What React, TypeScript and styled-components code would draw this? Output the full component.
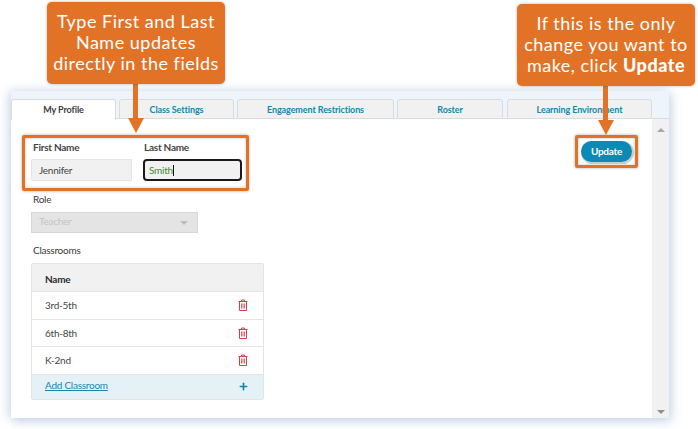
import React from 'react';
import styled, { createGlobalStyle } from 'styled-components';
import { Plus } from 'lucide-react';

const GlobalStyle = createGlobalStyle`
  html, body {
    margin: 0;
    padding: 0;
    background: #fff;
  }
  body {
    font-family: Lato, "Liberation Sans", sans-serif;
  }
`;

const Page = styled.div`
  position: relative;
  width: 698px;
  height: 429px;
  overflow: hidden;
  padding: 91px 0 0 11px;
  box-sizing: border-box;
`;

const Panel = styled.div`
  width: 658px;
  height: 327px;
  background: #fff;
  box-shadow: -3px 0 10px rgba(130, 160, 200, 0.3), 3px 3px 10px rgba(130, 160, 200, 0.35);
  display: flex;
  flex-direction: column;
`;

const TabStrip = styled.div`
  height: 28px;
  box-sizing: border-box;
  padding-top: 8px;
  background: #eef4fb;
  border-bottom: 1px solid #d9dcdf;
  display: flex;
`;

const Tab = styled.div<{ $w: number; $gap: number; $active?: boolean }>`
  width: ${p => p.$w}px;
  margin-right: ${p => p.$gap}px;
  height: ${p => (p.$active ? 21 : 20)}px;
  box-sizing: border-box;
  border: 1px solid #d9dcdf;
  border-bottom: ${p => (p.$active ? 'none' : '1px solid #d9dcdf')};
  border-radius: 3px 3px 0 0;
  background: ${p => (p.$active ? '#fff' : '#f1f1f1')};
  color: ${p => (p.$active ? '#3c3c3c' : '#1587ad')};
  font-size: 9px;
  font-weight: 700;
  letter-spacing: -0.1px;
  line-height: 20px;
  text-align: center;
  z-index: 1;
`;

const Body = styled.div`
  flex: 1;
  display: flex;
  min-height: 0;
`;

const Content = styled.div`
  flex: 1;
  position: relative;
  padding: 22px 0 0 20px;
  letter-spacing: -0.25px;
`;

const Scrollbar = styled.div`
  width: 17px;
  background: #f1f1f1;
  display: flex;
  flex-direction: column;
  justify-content: space-between;
  align-items: center;
  padding: 9px 0 4px;
  box-sizing: border-box;
`;

const ScrollArrow = styled.div<{ $down?: boolean }>`
  width: 0;
  height: 0;
  border-left: 4px solid transparent;
  border-right: 4px solid transparent;
  ${p => (p.$down ? 'border-top: 4px solid #8f8f8f;' : 'border-bottom: 4px solid #a8a8a8;')}
`;

const NameRow = styled.div`
  display: flex;
  gap: 11px;
`;

const Field = styled.div<{ $w: number }>`
  width: ${p => p.$w}px;
`;

const Label = styled.div<{ $pad?: number }>`
  font-size: 10px;
  font-weight: 700;
  color: #444;
  line-height: 12px;
  padding-left: ${p => p.$pad ?? 2}px;
  margin-bottom: 6px;
`;

const PlainLabel = styled(Label)`
  font-weight: 400;
  color: #3a3a3a;
  margin-bottom: 7px;
`;

const TextBox = styled.div<{ $focused?: boolean }>`
  height: 22px;
  box-sizing: border-box;
  background: #f1f1f1;
  border: ${p => (p.$focused ? '2px solid #1a1a1a' : '1px solid #e4e4e4')};
  border-radius: ${p => (p.$focused ? 4 : 1)}px;
  font-size: 10px;
  line-height: ${p => (p.$focused ? 18 : 20)}px;
  padding-left: ${p => (p.$focused ? 4 : 7)}px;
  color: ${p => (p.$focused ? '#3f8a3a' : '#444')};
`;

const Caret = styled.span`
  display: inline-block;
  width: 1px;
  height: 11px;
  background: #111;
  vertical-align: -2px;
`;

const Select = styled.div`
  width: 167px;
  height: 21px;
  box-sizing: border-box;
  margin-bottom: 11px;
  background: #e4e4e4;
  border: 1px solid #d8d8d8;
  font-size: 10px;
  line-height: 17px;
  padding: 0 9px 2px 7px;
  color: #c4c4c4;
  display: flex;
  justify-content: space-between;
  align-items: center;
`;

const SelectArrow = styled.div`
  width: 0;
  height: 0;
  margin-top: 2px;
  border-left: 4px solid transparent;
  border-right: 4px solid transparent;
  border-top: 4px solid #bdbdbd;
`;

const RoleGroup = styled.div`
  margin-top: 12px;
`;

const Table = styled.div`
  width: 233px;
  box-sizing: border-box;
  border: 1px solid #e2e4e6;
  border-radius: 2px;
`;

const HeadRow = styled.div`
  height: 27px;
  background: #f1f1f1;
  border-bottom: 1px solid #e2e4e6;
  font-size: 10px;
  font-weight: 700;
  color: #2c2c2c;
  line-height: 30px;
  padding-left: 13px;
`;

const Row = styled.div`
  height: 26.5px;
  border-bottom: 1px solid #e2e4e6;
  font-size: 10px;
  color: #444;
  display: flex;
  align-items: center;
  justify-content: space-between;
  padding: 0 15px 0 13px;
`;

const AddRow = styled.div`
  height: 24px;
  background: #e4f1f6;
  display: flex;
  align-items: center;
  justify-content: space-between;
  padding: 0 14px 0 13px;
  font-size: 10px;
  color: #1587ad;
`;

const AddLink = styled.a`
  color: #1587ad;
  text-decoration: underline;
  margin-top: -3px;
`;

const UpdateButton = styled.button`
  position: absolute;
  top: 22px;
  right: 20px;
  width: 51px;
  height: 21px;
  border: none;
  border-radius: 11px;
  background: #0a8ab5;
  box-shadow: 1px 1px 0 1px #cfcfcf;
  color: #fff;
  font-family: inherit;
  font-size: 10px;
  font-weight: 700;
  letter-spacing: -0.25px;
  padding: 0 0 2px;
`;

const Highlight = styled.div<{ $x: number; $y: number; $w: number; $h: number }>`
  position: absolute;
  left: ${p => p.$x}px;
  top: ${p => p.$y}px;
  width: ${p => p.$w}px;
  height: ${p => p.$h}px;
  box-sizing: border-box;
  border: 3px solid #e27326;
  border-radius: 2px;
  box-shadow: 0 0 3px rgba(0, 0, 0, 0.35), inset 0 0 3px rgba(0, 0, 0, 0.25);
`;

const Callout = styled.div<{ $x: number; $y: number }>`
  position: absolute;
  left: ${p => p.$x}px;
  top: ${p => p.$y}px;
  width: 178px;
  height: 82px;
  box-sizing: border-box;
  padding-top: 9px;
  background: #e27326;
  border-radius: 5px;
  box-shadow: 0 0 3px rgba(0, 0, 0, 0.3);
  color: #fff;
  font-size: 18px;
  line-height: 21px;
  letter-spacing: 0.5px;
  text-align: center;
  white-space: nowrap;
  z-index: 3;
  strong {
    font-weight: 900;
  }
`;

const ArrowShaft = styled.div<{ $x: number; $y: number }>`
  position: absolute;
  left: ${p => p.$x}px;
  top: ${p => p.$y}px;
  width: 5px;
  height: 36px;
  background: #e27326;
  z-index: 2;
`;

const ArrowHead = styled.div<{ $x: number; $y: number }>`
  position: absolute;
  left: ${p => p.$x}px;
  top: ${p => p.$y}px;
  width: 0;
  height: 0;
  border-left: 8px solid transparent;
  border-right: 8px solid transparent;
  border-top: 15px solid #e27326;
  z-index: 2;
`;

const TrashIcon = () => (
  <svg width="10" height="12" viewBox="0 0 10 12" fill="none" stroke="#d0414a" strokeWidth="1">
    <path d="M0.5 2.5h9M3.5 2.5V1h3v1.5M1.5 2.5v9h7v-9" />
    <path d="M3.5 4.5v5M5 4.5v5M6.5 4.5v5" strokeWidth="0.8" />
  </svg>
);

const classrooms = ['3rd-5th', '6th-8th', 'K-2nd'];

const tabs = [
  { name: 'My Profile', w: 105, gap: 3, active: true },
  { name: 'Class Settings', w: 115, gap: 3 },
  { name: 'Engagement Restrictions', w: 157, gap: 3 },
  { name: 'Roster', w: 106, gap: 4 },
  { name: 'Learning Environment', w: 145, gap: 0 },
];

const App: React.FC = () => {
  return (
    <Page>
      <GlobalStyle />
      <Panel>
        <TabStrip>
          {tabs.map(t => (
            <Tab key={t.name} $w={t.w} $gap={t.gap} $active={t.active}>
              {t.name}
            </Tab>
          ))}
        </TabStrip>
        <Body>
          <Content>
            <NameRow>
              <Field $w={101}>
                <Label>First Name</Label>
                <TextBox>Jennifer</TextBox>
              </Field>
              <Field $w={99}>
                <Label $pad={1}>Last Name</Label>
                <TextBox $focused>
                  Smith
                  <Caret />
                </TextBox>
              </Field>
            </NameRow>
            <RoleGroup>
              <PlainLabel>Role</PlainLabel>
              <Select>
                Teacher
                <SelectArrow />
              </Select>
            </RoleGroup>
            <PlainLabel>Classrooms</PlainLabel>
            <Table>
              <HeadRow>Name</HeadRow>
              {classrooms.map(c => (
                <Row key={c}>
                  {c}
                  <TrashIcon />
                </Row>
              ))}
              <AddRow>
                <AddLink>Add Classroom</AddLink>
                <Plus size={11} strokeWidth={3.5} color="#0a86b0" />
              </AddRow>
            </Table>
            <UpdateButton>Update</UpdateButton>
          </Content>
          <Scrollbar>
            <ScrollArrow />
            <ScrollArrow $down />
          </Scrollbar>
        </Body>
      </Panel>

      <Highlight $x={22} $y={135} $w={227} $h={56} />
      <Highlight $x={575} $y={135} $w={63} $h={33} />

      <Callout $x={47} $y={2}>
        Type First and Last
        <br />
        Name updates
        <br />
        directly in the fields
      </Callout>
      <ArrowShaft $x={133} $y={83} />
      <ArrowHead $x={128} $y={118} />

      <Callout $x={517} $y={4}>
        If this is the only
        <br />
        change you want to
        <br />
        make, click <strong>Update</strong>
      </Callout>
      <ArrowShaft $x={603} $y={85} />
      <ArrowHead $x={598} $y={120} />
    </Page>
  );
};

export default App;
